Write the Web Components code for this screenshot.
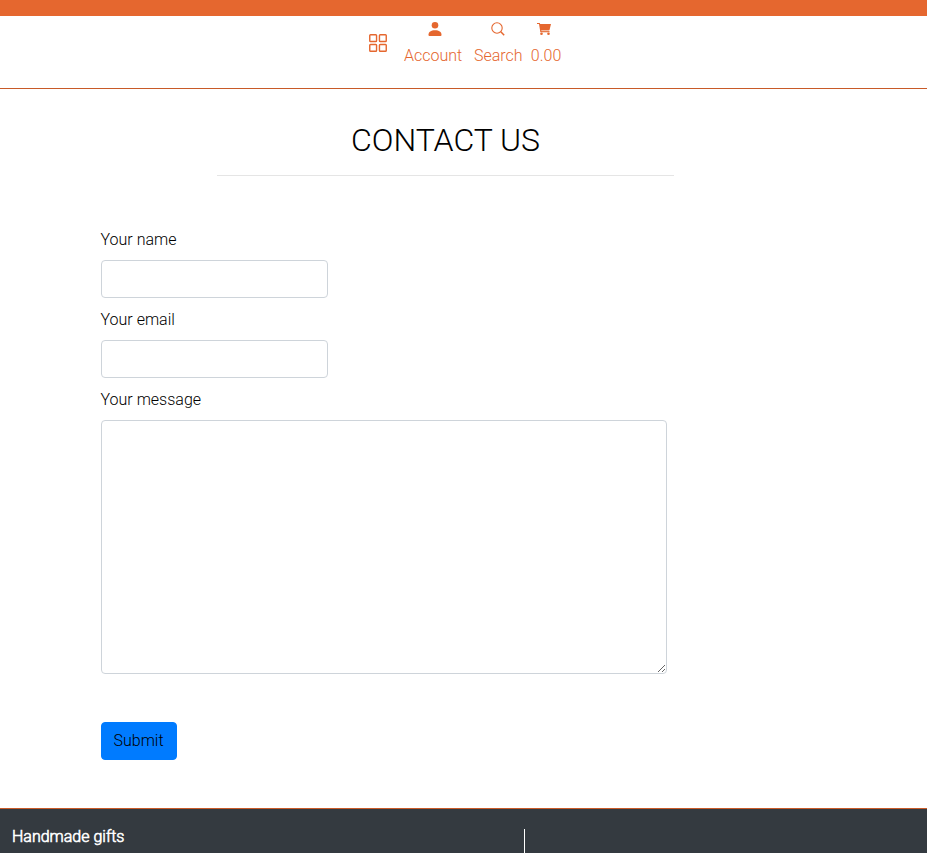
<!DOCTYPE html>
<html lang="en"><head><meta charset="utf-8"><title>Contact us</title>
<style>html,body{margin:0;height:853px;overflow:hidden}body{font:300 16px/24px Roboto,sans-serif;color:#000;background:#fff}</style></head>
<body><shop-page></shop-page>
<script>
const define=(name,html)=>customElements.define(name,class extends HTMLElement{constructor(){super();const t=document.createElement('template');t.innerHTML=html;this.attachShadow({mode:'open'}).append(t.content.cloneNode(true));}});
define('nav-item',`<style>:host{display:flex;flex-direction:column;align-items:center;color:#e5672f}.i{height:24px;display:flex;align-items:center;margin-bottom:3px}</style><div class="i"><slot name="icon"></slot></div><span><slot></slot></span>`);
define('shop-header',`<style>:host{display:flex;box-sizing:border-box;height:89px;border-top:16px solid #e5672f;border-bottom:1px solid #c85a28;padding:1px 0 0 368px;color:#e5672f}svg{display:block;fill:currentColor}.g{margin:17px 1px 0}.a{margin-left:16px}.s{margin-left:11.700px}.c{margin-left:8.300px}.a svg{margin-left:4px}.s svg{margin-right:1px}.c svg{margin-right:4px}</style>
<svg class="g" width="18" height="18" viewBox="0 0 18 18"><g fill="none" stroke="currentColor" stroke-width="1.400"><rect x=".75" y=".75" width="6.800" height="6.800" rx=".8"/><rect x="10.450" y=".75" width="6.800" height="6.800" rx=".8"/><rect x=".75" y="10.450" width="6.800" height="6.800" rx=".8"/><rect x="10.450" y="10.450" width="6.800" height="6.800" rx=".8"/></g></svg>
<nav-item class="a"><svg slot="icon" width="14" height="14" viewBox="0 0 14 14"><circle cx="7" cy="3.300" r="3.300"/><path d="M1.300 14Q.5 14 .5 12.800C.5 9.800 3 8.200 7 8.200s6.500 1.600 6.500 4.600Q13.500 14 12.700 14z"/></svg>Account</nav-item>
<nav-item class="s"><svg slot="icon" width="14" height="14" viewBox="0 0 14 14"><circle cx="6" cy="6" r="5.200" fill="none" stroke="currentColor" stroke-width="1.100"/><path d="M9.800 9.800L13.200 13.200" fill="none" stroke="currentColor" stroke-width="1.500"/></svg>Search</nav-item>
<nav-item class="c"><svg slot="icon" width="14" height="14" viewBox="0 0 14 14"><path d="M0 1h2.700l.5 1H14l-1.500 6H4.200l.2 1.200h8.100v1H3.400L2 2H0z"/><path d="M4 8h8.300v2H3.500z" opacity=".45"/><circle cx="4.500" cy="11.800" r="1.300"/><circle cx="11.500" cy="11.800" r="1.300"/></svg>0.00</nav-item>`);
define('form-field',`<style>:host{display:block;height:80px}label{display:block;margin-bottom:8px}input,textarea{display:block;box-sizing:border-box;width:227px;height:38px;border:1px solid #ced4da;border-radius:4px;background:#fff;outline:0;padding:6px 12px}textarea{width:566px;height:254px;resize:both}:host([multiline]){height:286px}:host([multiline]) input,:host(:not([multiline])) textarea{display:none}</style><label><slot></slot></label><input><textarea></textarea>`);
define('contact-form',`<style>:host{display:block;padding:52px 0 0 100.5px}button{display:block;margin:48px 0 0;width:76px;height:38px;border:1px solid #007bff;border-radius:4px;background:#007bff;font:inherit;color:#000;padding:6px 12px}</style><form-field>Your name</form-field><form-field>Your email</form-field><form-field multiline>Your message</form-field><button type="button">Submit</button>`);
define('page-title',`<style>:host{display:block;width:457px;margin-left:217px;padding-top:32px;height:54px;border-bottom:1px solid #e5e5e5;text-align:center}h1{margin:0;font-size:32px;line-height:38px;font-weight:300}</style><h1><slot></slot></h1>`);
define('shop-footer',`<style>:host{display:flex;box-sizing:border-box;height:45px;margin-top:48px;background:#343a40;border-top:1px solid #c85a28;color:#fff}b{font-weight:300;-webkit-text-stroke:.6px #fff;width:512px;padding:16px 0 0 12px;box-sizing:content-box}i{width:1px;background:#fff;margin-top:20px}</style><b>Handmade gifts</b><i></i>`);
define('shop-page',`<style>:host{display:block}</style><shop-header></shop-header><page-title>CONTACT US</page-title><contact-form></contact-form><shop-footer></shop-footer>`);
</script></body></html>
